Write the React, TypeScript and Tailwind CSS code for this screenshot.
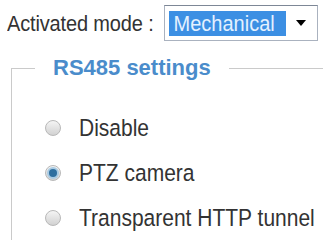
import { useState } from "react";

const options = ["Disable", "PTZ camera", "Transparent HTTP tunnel"];

function Radio({ checked }: { checked: boolean }) {
  return (
    <span className="flex h-[16px] w-[16px] items-center justify-center rounded-full border border-[#b8b8b8] bg-gradient-to-b from-[#f4f4f4] to-[#d2d2d2]">
      {checked && (
        <span className="h-[8px] w-[8px] rounded-full bg-[#2f6f9f] ring-2 ring-[#a9cbe3]" />
      )}
    </span>
  );
}

export default function App() {
  const [mode, setMode] = useState(1);

  return (
    <div className="h-[240px] w-[323px] overflow-hidden bg-white pt-[5px] font-['Liberation_Sans',Arial,sans-serif] text-[#333]">
      <div className="flex h-[36px] items-center pl-[7px]">
        <span className="inline-block scale-y-110 text-[20px] leading-none tracking-[-0.15px]">
          Activated mode :
        </span>
        <div className="ml-[10px] flex h-[36px] w-[154px] shrink-0 items-center border border-[#aab2bf] border-t-[#7d8796] pl-[4px]">
          <span className="flex h-[25px] w-[117px] items-center bg-[#3c8fe3] pl-[5px] text-[20px] leading-none text-[#e4f1ff]">
            <span className="inline-block scale-y-110">Mechanical</span>
          </span>
          <span className="ml-[10px] h-0 w-0 border-x-[5px] border-t-[6px] border-x-transparent border-t-black" />
        </div>
      </div>

      <fieldset className="ml-[11px] mt-[15px] w-[330px] border-l border-t border-[#cacaca] pl-[23px] pt-[25px]">
        <legend className="px-[18px] text-[22px] font-bold leading-[24px] text-[#4a8ccb]">
          RS485 settings
        </legend>
        {options.map((label, i) => (
          <div
            key={label}
            className="flex h-[45px] cursor-pointer items-center pl-[10px]"
            onClick={() => setMode(i)}
          >
            <Radio checked={mode === i} />
            <span className="ml-[18px] inline-block scale-y-[1.15] whitespace-nowrap text-[21px] leading-none">
              {label}
            </span>
          </div>
        ))}
      </fieldset>
    </div>
  );
}
